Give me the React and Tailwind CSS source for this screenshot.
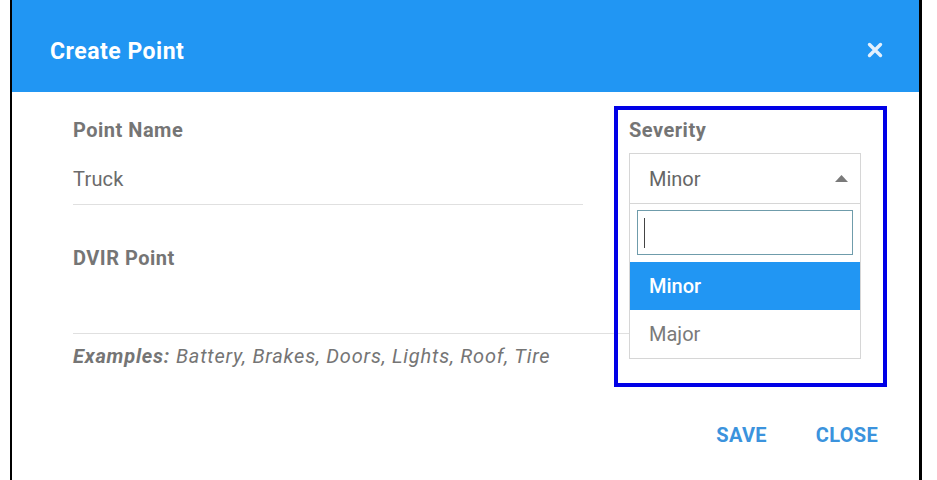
import React from "react";

function CloseX() {
  return (
    <svg width="16" height="16" viewBox="0 0 16 16" className="mt-[3px]">
      <path d="M2.5 2.5 L13.5 13.5 M13.5 2.5 L2.5 13.5" stroke="#e3f0fd" strokeWidth="3.4" strokeLinecap="round" />
    </svg>
  );
}

function SeveritySelect() {
  return (
    <div className="relative mt-[11px]">
      <div className="flex h-[51px] items-center justify-between border border-[#d6d6d6] pl-[19px] pr-[12px]">
        <span className="text-[20px] leading-[28px] text-[#666]">Minor</span>
        <svg width="13" height="7" viewBox="0 0 13 7">
          <path d="M0 7 L6.5 0 L13 7 Z" fill="#7a7a7a" />
        </svg>
      </div>
      {/* open dropdown list */}
      <div className="absolute left-0 top-full z-10 w-full border-x border-b border-[#d6d6d6] bg-white">
        <div className="px-[7px] pb-[7px] pt-[6px]">
          <div className="flex h-[45px] items-center border border-[#6f9cab] bg-white">
            <span className="ml-[6px] h-[30px] w-px bg-[#444]" />
          </div>
        </div>
        <div className="flex h-[48px] items-center bg-[#2196f3] pl-[19px] text-[20px] font-medium text-white">
          Minor
        </div>
        <div className="flex h-[48px] items-center pl-[19px] text-[20px] text-[#7a7a7a]">
          Major
        </div>
      </div>
    </div>
  );
}

export default function App() {
  return (
    <div className="h-[480px] bg-white font-[Roboto,Arial,sans-serif]">
      <div className="ml-[10px] flex h-full w-[912px] flex-col border-l-2 border-r-[3px] border-black">
        <div className="flex h-[92px] shrink-0 items-start justify-between bg-[#2196f3] pl-[38px] pr-[36px] pt-[39px]">
          <h2 className="text-[23px] font-bold leading-[26px] tracking-[0.5px] text-white">Create Point</h2>
          <CloseX />
        </div>

        <div className="pl-[61px] pr-[58px] pt-[26px]">
          <div className="flex items-start gap-[46px]">
            <div className="w-[510px]">
              <div className="text-[20px] font-bold leading-[24px] tracking-[0.5px] text-[#757575]">Point Name</div>
              <div className="mt-[23px] h-[40px] border-b border-[#e0e0e0] text-[20px] leading-[28px] tracking-[0.2px] text-[#6b6b6b]">
                Truck
              </div>
            </div>
            <div className="relative w-[232px]">
              <div className="text-[20px] font-bold leading-[24px] tracking-[0.5px] text-[#757575]">Severity</div>
              <SeveritySelect />
              {/* highlight outline */}
              <div className="pointer-events-none absolute left-[-15px] top-[-12px] z-20 h-[281px] w-[273px] border-4 border-[#0000e6]" />
            </div>
          </div>

          <div className="mt-[41px] text-[20px] font-bold leading-[24px] tracking-[0.5px] text-[#757575]">DVIR Point</div>
          <div className="h-[64px] border-b border-[#e0e0e0]" />
          <p className="mt-[10px] text-[20px] italic leading-[24px] tracking-[0.8px] text-[#757575]">
            <span className="font-bold">Examples:</span> Battery, Brakes, Doors, Lights, Roof, Tire
          </p>
        </div>

        <div className="mt-[53px] flex justify-end gap-[49px] pr-[41px]">
          <button className="text-[20px] font-bold leading-[28px] tracking-[0.3px] text-[#3b93dd]">SAVE</button>
          <button className="text-[20px] font-bold leading-[28px] tracking-[0.3px] text-[#3b93dd]">CLOSE</button>
        </div>
      </div>
    </div>
  );
}
